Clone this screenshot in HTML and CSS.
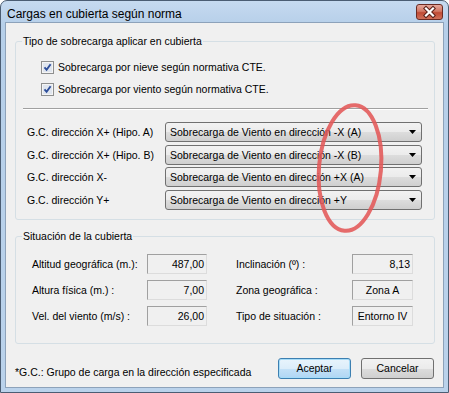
FILE: index.html
```html
<!DOCTYPE html>
<html lang="es">
<head>
<meta charset="utf-8">
<title>Cargas en cubierta según norma</title>
<link rel="stylesheet" href="styles.css">
</head>
<body>
<div class="window">
  <div class="titlebar">
    <span class="title">Cargas en cubierta según norma</span>
    <span class="close">
      <svg width="25" height="14" viewBox="0 0 25 14">
        <path d="M9 3.5 L16 10.5 M16 3.5 L9 10.5" stroke="#5a1f18" stroke-width="4.2" stroke-linecap="square" fill="none"/>
        <path d="M9 3.5 L16 10.5 M16 3.5 L9 10.5" stroke="#ffffff" stroke-width="2.2" stroke-linecap="square" fill="none"/>
      </svg>
    </span>
  </div>
  <div class="client">
    <fieldset class="group g1">
      <legend>Tipo de sobrecarga aplicar en cubierta</legend>
      <div class="checks">
        <label class="check"><span class="box"><svg width="13" height="13" viewBox="0 0 13 13"><rect x="0.5" y="0.5" width="12" height="12" fill="#f4f4f4" stroke="#8e8f8f"/><rect x="2" y="2" width="9" height="9" fill="#dfe5ee"/><path d="M3.5 6.3 L5.6 8.8 L9.6 3.3" stroke="#2d4e9a" stroke-width="1.9" fill="none"/></svg></span>Sobrecarga por nieve según normativa CTE.</label>
        <label class="check"><span class="box"><svg width="13" height="13" viewBox="0 0 13 13"><rect x="0.5" y="0.5" width="12" height="12" fill="#f4f4f4" stroke="#8e8f8f"/><rect x="2" y="2" width="9" height="9" fill="#dfe5ee"/><path d="M3.5 6.3 L5.6 8.8 L9.6 3.3" stroke="#2d4e9a" stroke-width="1.9" fill="none"/></svg></span>Sobrecarga por viento según normativa CTE.</label>
      </div>
      <div class="sep"></div>
      <div class="combos">
        <div class="crow"><span class="clabel">G.C. dirección X+ (Hipo. A)</span><div class="combo"><span>Sobrecarga de Viento en dirección -X (A)</span><svg class="arrow" width="7" height="4" viewBox="0 0 7 4"><path d="M0 0 H7 L3.5 4 Z" fill="#000"/></svg></div></div>
        <div class="crow"><span class="clabel">G.C. dirección X+ (Hipo. B)</span><div class="combo"><span>Sobrecarga de Viento en dirección -X (B)</span><svg class="arrow" width="7" height="4" viewBox="0 0 7 4"><path d="M0 0 H7 L3.5 4 Z" fill="#000"/></svg></div></div>
        <div class="crow"><span class="clabel">G.C. dirección X-</span><div class="combo"><span>Sobrecarga de Viento en dirección +X (A)</span><svg class="arrow" width="7" height="4" viewBox="0 0 7 4"><path d="M0 0 H7 L3.5 4 Z" fill="#000"/></svg></div></div>
        <div class="crow"><span class="clabel">G.C. dirección Y+</span><div class="combo"><span>Sobrecarga de Viento en dirección +Y</span><svg class="arrow" width="7" height="4" viewBox="0 0 7 4"><path d="M0 0 H7 L3.5 4 Z" fill="#000"/></svg></div></div>
      </div>
    </fieldset>
    <fieldset class="group g2">
      <legend>Situación de la cubierta</legend>
      <div class="grid">
        <span class="lbl">Altitud geográfica (m.):</span><span class="field num">487,00</span>
        <span class="lbl rlbl">Inclinación (º) :</span><span class="field num">8,13</span>
        <span class="lbl">Altura física (m.) :</span><span class="field num">7,00</span>
        <span class="lbl rlbl">Zona geográfica :</span><span class="field ctr">Zona A</span>
        <span class="lbl">Vel. del viento (m/s) :</span><span class="field num">26,00</span>
        <span class="lbl rlbl">Tipo de situación :</span><span class="field ctr">Entorno IV</span>
      </div>
    </fieldset>
    <div class="footer">
      <span class="note">*G.C.: Grupo de carga en la dirección especificada</span>
      <div class="buttons">
        <button class="btn default">Aceptar</button>
        <button class="btn">Cancelar</button>
      </div>
    </div>
  </div>
  <svg class="annot" width="449" height="393" viewBox="0 0 449 393">
    <ellipse cx="350" cy="168" rx="31" ry="63" transform="rotate(5 350 168)" fill="none" stroke="#e35858" stroke-opacity="0.88" stroke-width="4"/>
  </svg>
</div>
</body>
</html>
```

FILE: styles.css
```css
html, body {
  margin: 0;
  padding: 0;
  background: #ffffff;
}

body {
  font-family: "Liberation Sans", Arial, sans-serif;
  font-size: 10.5px;
  color: #000;
}

.window {
  position: relative;
  width: 449px;
  height: 393px;
  box-sizing: border-box;
  border: 1px solid #4b5d73;
  border-radius: 7px 7px 0 0;
  background: linear-gradient(#c6daf0, #b6cfe9 24px, #bad2eb);
  padding: 0 4px 4px;
  display: flex;
  flex-direction: column;
}

.titlebar {
  height: 21px;
  display: flex;
  align-items: flex-start;
  justify-content: space-between;
  padding-left: 2px;
}

.title {
  margin-top: 6px;
  font-size: 12px;
  line-height: 14px;
}

.close {
  margin-top: 3px;
  margin-right: 1px;
  width: 27px;
  height: 16px;
  box-sizing: border-box;
  border: 1px solid #6b2a22;
  border-radius: 3px;
  background: linear-gradient(#e6a89c, #d27764 45%, #c04a34 55%, #d0705a);
  display: flex;
  align-items: center;
  justify-content: center;
}

.client {
  flex: 1;
  background: #f0f0f0;
  border: 1px solid #8da2ba;
  display: flex;
  flex-direction: column;
}

.group {
  margin: 0 8px 0 9px;
  padding: 0;
  border: 1px solid #d5dfe5;
  border-radius: 3px;
  min-width: 0;
}

.group legend {
  margin-left: 6px;
  padding: 0 1px;
  line-height: 13px;
}

.g1 {
  margin-top: 12px;
}

.checks {
  padding: 8px 0 0 25px;
  display: flex;
  flex-direction: column;
}

.check {
  height: 22px;
  display: flex;
  align-items: center;
}

.box {
  width: 13px;
  height: 13px;
  margin-right: 4px;
  display: flex;
}

.sep {
  margin: 8px 6px 0 7px;
  border-top: 1px solid #a0a0a0;
  border-bottom: 1px solid #ffffff;
}

.combos {
  padding: 12px 0 9px 11px;
  display: flex;
  flex-direction: column;
  gap: 2.5px;
}

.crow {
  display: flex;
  align-items: center;
}

.clabel {
  width: 138px;
  flex: none;
}

.combo {
  width: 257px;
  height: 20px;
  box-sizing: border-box;
  border: 1px solid #707070;
  border-radius: 3px;
  background: linear-gradient(#f2f2f2, #ebebeb 50%, #dddddd 50%, #cfcfcf);
  display: flex;
  align-items: center;
  padding: 0 5px 0 4px;
}

.combo .arrow {
  margin-left: auto;
}

.g2 {
  margin-top: 10px;
}

.grid {
  display: grid;
  grid-template-columns: 115px 60px 145px 61px;
  row-gap: 6px;
  padding: 11px 0 17px 16px;
  align-items: center;
}

.rlbl {
  padding-left: 29px;
}

.field {
  height: 20px;
  box-sizing: border-box;
  border: 1px solid;
  border-color: #a0a0a0 #dcdcdc #dcdcdc #a0a0a0;
  background: #f0f0f0;
  line-height: 18px;
}

.num {
  text-align: right;
  padding-right: 2px;
}

.ctr {
  text-align: center;
}

.footer {
  margin-top: 14px;
  padding: 0 9px;
  display: flex;
  align-items: center;
  justify-content: space-between;
}

.note {
  margin-top: 7px;
}

.buttons {
  display: flex;
  gap: 10px;
}

.btn {
  width: 73px;
  height: 21px;
  box-sizing: border-box;
  font-family: "Liberation Sans", Arial, sans-serif;
  font-size: 10.5px;
  color: #000;
  border: 1px solid #707070;
  border-radius: 3px;
  background: linear-gradient(#f2f2f2, #ebebeb 50%, #dddddd 50%, #cfcfcf);
  padding: 0;
}

.btn.default {
  border-color: #3c7fb1;
  background: linear-gradient(#e8f4fc, #dcedfa 50%, #c4e1f7 50%, #b0d6f4);
  box-shadow: inset 0 0 0 1px #a6dcf8;
}

.annot {
  position: absolute;
  left: -1px;
  top: -1px;
  pointer-events: none;
}
```
